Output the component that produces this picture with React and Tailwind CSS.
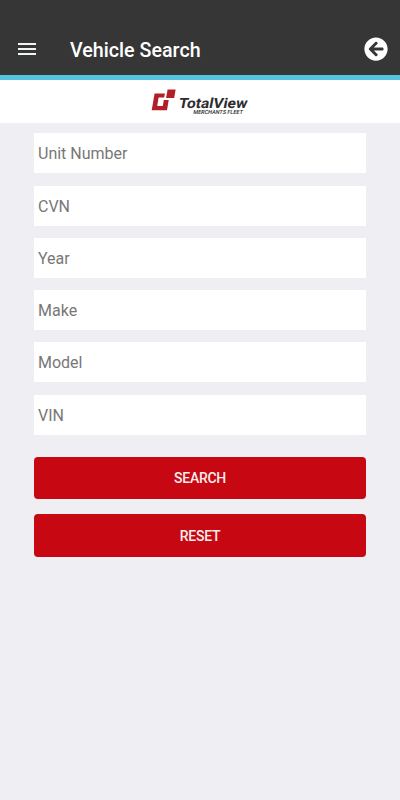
import { FaArrowCircleLeft } from "react-icons/fa";

const fields = ["Unit Number", "CVN", "Year", "Make", "Model", "VIN"];

function Logo() {
  return (
    <svg className="h-[30px] w-[100px]" viewBox="150 86 100 30" aria-label="TotalView Merchants Fleet">
      <path fill="#b31f29" d="M154.6 93.5H164.9L164.2 97.6H158.6L157.2 106H162.8L163.8 100H168.7L167 110.3H151.7Z" />
      <path fill="#b31f29" d="M167.6 89.4H175.6L174.2 98H166.1Z" />
      <g transform="translate(178 108.2) skewX(-11)">
        <text x="0" y="0" textLength="68.5" lengthAdjust="spacingAndGlyphs" className="fill-[#2d2c31] font-[Roboto,sans-serif] text-[14px] font-bold">TotalView</text>
      </g>
      <g transform="translate(193 113.8) skewX(-11)">
        <text x="0" y="0" textLength="49.5" lengthAdjust="spacingAndGlyphs" className="fill-[#2d2c31] font-[Roboto,sans-serif] text-[5.8px] font-medium">MERCHANTS FLEET</text>
      </g>
    </svg>
  );
}

export default function App() {
  return (
    <div className="flex h-[800px] w-[400px] flex-col overflow-hidden bg-[#efeef3] font-[Roboto,sans-serif]">
      <header className="flex h-20 shrink-0 items-end border-b-[5px] border-[#54c3e0] bg-[#363636] pr-3 pl-[18px]">
        <button className="mb-5 flex w-[18px] flex-col gap-[3px]" aria-label="Menu">
          <span className="h-0.5 w-full bg-[#f0f4f3]" />
          <span className="h-0.5 w-full bg-[#f0f4f3]" />
          <span className="h-0.5 w-full bg-[#f0f4f3]" />
        </button>
        <h1 className="mb-2.5 ml-[34px] flex-1 text-[19.7px] leading-7 font-medium text-white">Vehicle Search</h1>
        <button className="mb-[14px]" aria-label="Back">
          <FaArrowCircleLeft className="size-6 text-white" />
        </button>
      </header>
      <div className="flex h-[43px] shrink-0 justify-center bg-white pt-1.5">
        <Logo />
      </div>
      <form className="flex flex-col px-[34px] pt-[10.3px]">
        <div className="flex flex-col gap-[12.3px]">
          {fields.map((name) => (
            <input
              key={name}
              placeholder={name}
              className="h-10 w-full bg-white px-1 pt-px text-base text-[#777] placeholder:text-[#777] placeholder:opacity-100"
            />
          ))}
        </div>
        <button type="button" className="mt-[22px] h-[42.3px] rounded-[4px] bg-[#c70711] text-sm font-medium tracking-[-0.3px] text-[#f8eeee]">SEARCH</button>
        <button type="button" className="mt-[15.3px] h-[42.3px] rounded-[4px] bg-[#c70711] text-sm font-medium tracking-[-0.3px] text-[#f8eeee]">RESET</button>
      </form>
    </div>
  );
}
